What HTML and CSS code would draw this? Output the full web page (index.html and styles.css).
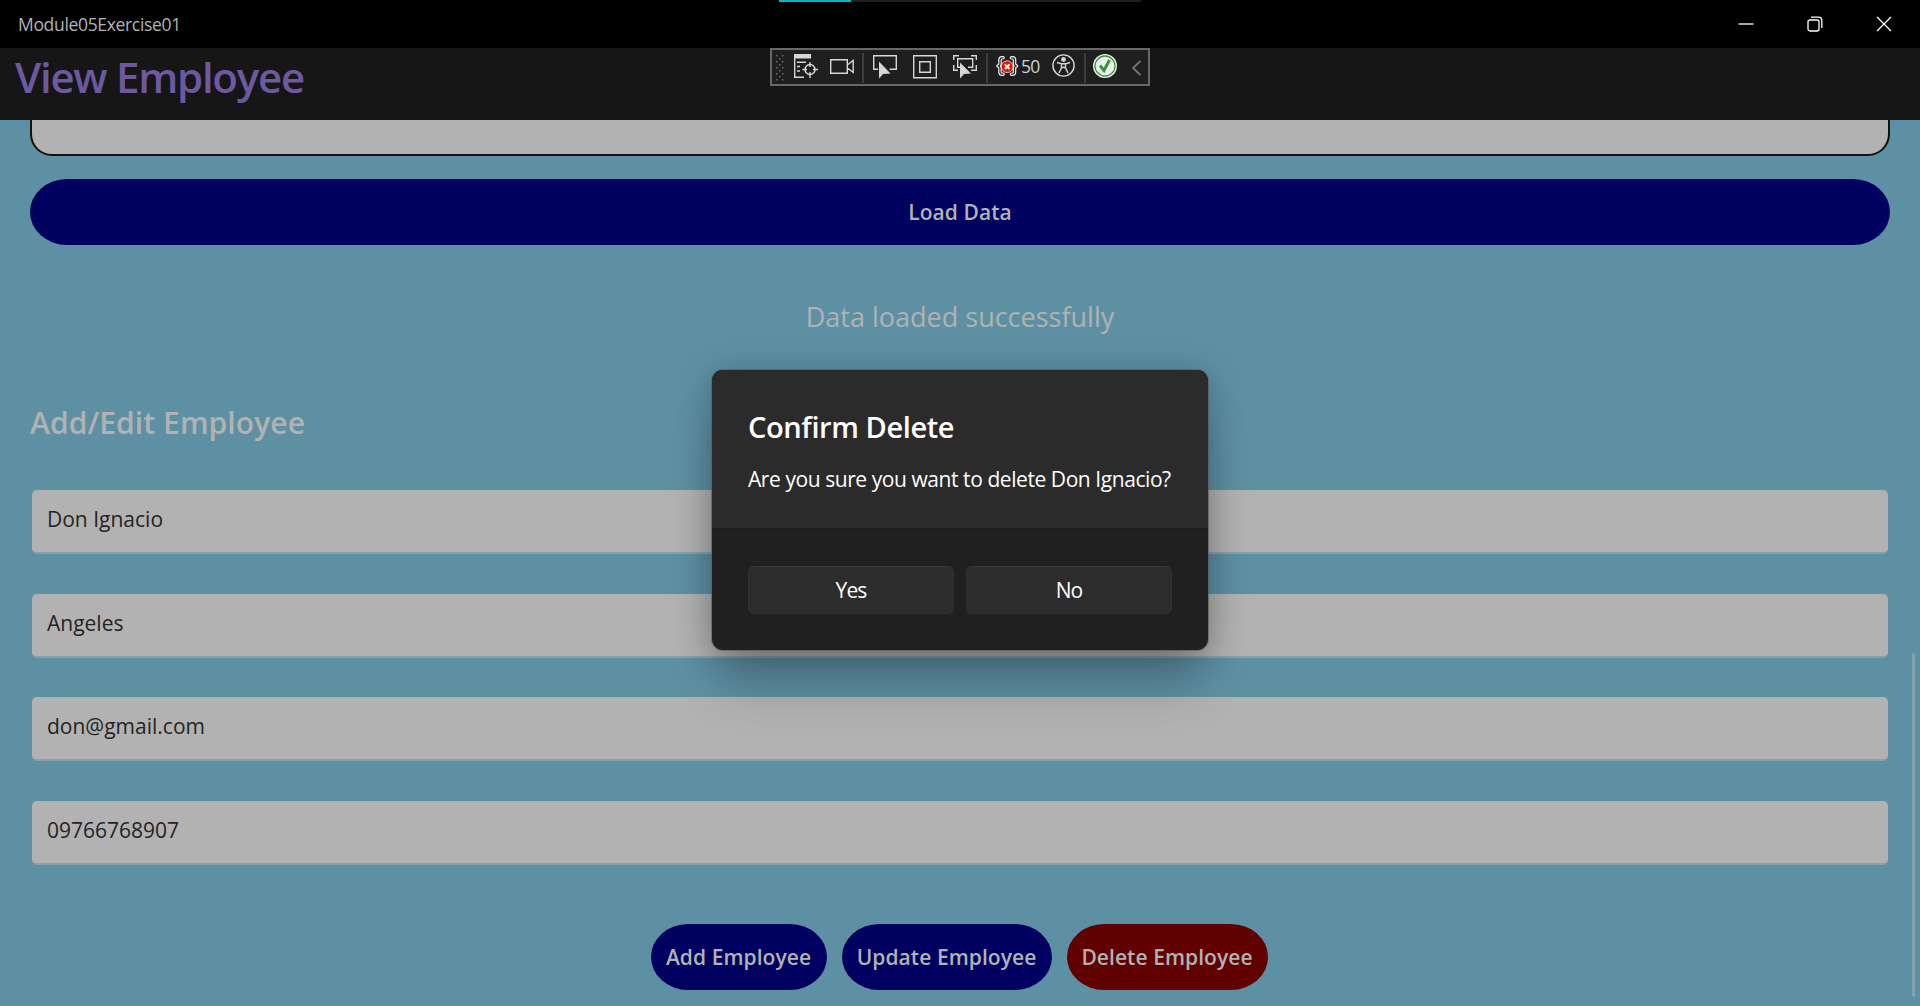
FILE: index.html
```html
<!DOCTYPE html>
<html lang="en">
<head>
<meta charset="utf-8">
<title>Module05Exercise01</title>
<link rel="stylesheet" href="styles.css">
</head>
<body>
<div class="window">
  <div class="titlebar">
    <span class="app-name">Module05Exercise01</span>
    <div class="caption-buttons">
      <svg class="caption" viewBox="0 0 16 16"><path d="M.5 8h15"/></svg>
      <svg class="caption" viewBox="0 0 16 16"><rect x="1" y="4" width="11" height="11" rx="2"/><path d="M4 1.2h7.5a3.3 3.3 0 0 1 3.3 3.3V12"/></svg>
      <svg class="caption" viewBox="0 0 16 16"><path d="M1 1l14 14M15 1L1 15"/></svg>
    </div>
  </div>
  <header class="page-header"><h1>View Employee</h1></header>

  <main class="content">
    <div class="list-frame"></div>
    <button class="btn load">Load Data</button>
    <p class="status">Data loaded successfully</p>
    <h2 class="section-title">Add/Edit Employee</h2>
    <div class="fields">
      <div class="entry">Don Ignacio</div>
      <div class="entry">Angeles</div>
      <div class="entry">don@gmail.com</div>
      <div class="entry">09766768907</div>
    </div>
    <div class="actions">
      <button class="btn add">Add Employee</button>
      <button class="btn update">Update Employee</button>
      <button class="btn delete">Delete Employee</button>
    </div>
    <div class="scroll-thumb"></div>
  </main>

  <div class="progress"><div class="progress-value"></div></div>

  <div class="debug-bar">
    <svg class="grip" viewBox="0 0 10 28"><path fill="#6a6a6a" d="M1 1h1.500v1.500H1zM7 1h1.500v1.500H7zM4 4h1.500v1.500H4zM1 7h1.500v1.500H1zM7 7h1.500v1.500H7zM4 10h1.500v1.500H4zM1 13h1.500v1.500H1zM7 13h1.500v1.500H7zM4 16h1.500v1.500H4zM1 19h1.500v1.500H1zM7 19h1.500v1.500H7zM4 22h1.500v1.500H4zM1 25h1.500v1.500H1zM7 25h1.500v1.500H7z"/></svg>
    <svg class="ico tree" viewBox="0 0 24 24"><path fill="#d6d6d6" stroke="none" d="M0 0h17v4.500H0z"/><path d="M.7 4v19.300H10M3 8.300h9M3 12.500h3M3 17h3"/><circle cx="16" cy="15.500" r="5"/><path d="M16 8v5M16 18v6M8.500 15.500H13M19 15.500h5"/></svg>
    <svg class="ico cam" viewBox="0 0 24 24"><path d="M.7 5.700h16.600v13.600H.7zM17.300 11l5.900-4.500v11.800L17.300 14"/></svg>
    <i class="sep s1"></i>
    <svg class="ico sel" viewBox="0 0 24 24"><path d="M5 15.300H.7V1.700h22.600v13.600H16.500"/><path class="solid" d="M6 7.500v17l4-4.500 7.500-.5z"/></svg>
    <svg class="ico sq" viewBox="0 0 24 24"><path d="M.7 1.700h22.600v22H.7zM6.700 7.700h10.600v10.600H6.700z"/></svg>
    <svg class="ico sq" viewBox="0 0 24 24"><path d="M.7 6V1.700H6M18 1.700h5.300V6M.7 11v5.300H5M23.300 11v5.300H18"/><path d="M8 13.300H4.700V4.700h15v8.600H15"/><path class="solid" d="M7 8.500v16l4-4.500 7-.5z"/></svg>
    <i class="sep s2"></i>
    <svg class="ico err" viewBox="0 0 24 24"><g stroke-linecap="round" stroke-linejoin="round"><path stroke="#f0f0f0" stroke-width="3.600" d="M8 3.800H7Q5 3.800 5 6V9.500Q5 12 3 12 5 12 5 14.500V18Q5 20.200 7 20.200H8M16.500 3.800H17.500Q19.500 3.800 19.500 6V9.500Q19.500 12 21.500 12 19.500 12 19.500 14.500V18Q19.500 20.200 17.500 20.200H16.500"/><path stroke="#222" stroke-width="1.200" d="M8 3.800H7Q5 3.800 5 6V9.500Q5 12 3 12 5 12 5 14.500V18Q5 20.200 7 20.200H8M16.500 3.800H17.500Q19.500 3.800 19.500 6V9.500Q19.500 12 21.500 12 19.500 12 19.500 14.500V18Q19.500 20.200 17.500 20.200H16.500"/></g><circle cx="12.200" cy="12.700" r="5.900" fill="#e51400" stroke="#f0f0f0" stroke-width=".8"/><path stroke="#fff" stroke-width="2" d="M9.900 10.400l4.600 4.600M14.500 10.400l-4.600 4.600"/></svg>
    <span class="count">50</span>
    <svg class="ico acc" viewBox="0 0 24 24"><circle cx="12.500" cy="11.500" r="10.600"/><circle cx="12.500" cy="5.500" r="2.400" fill="#d6d6d6" stroke="none"/><path d="M6 8.500l4.500 1.200v4L8 19M19 8.500l-4.500 1.200v4L17 19M10.500 9.700h4M10.500 14.200l2-1 2 1"/></svg>
    <i class="sep s3"></i>
    <svg class="ico ok" viewBox="0 0 24 24"><circle cx="12" cy="12" r="12" fill="#f0f0f0" stroke="none"/><circle cx="12" cy="12" r="10" stroke="#339933" stroke-width="1.300"/><path stroke="#339933" stroke-width="3" d="M7 11.500l4 5 5.500-10.500"/></svg>
    <svg class="chev" viewBox="0 0 9 24"><path d="M8.500 7L1 14l7.500 7"/></svg>
  </div>

  <section class="dialog">
    <div class="dialog-body">
      <h3>Confirm Delete</h3>
      <p>Are you sure you want to delete Don Ignacio?</p>
    </div>
    <div class="dialog-footer">
      <button class="yes">Yes</button>
      <button class="no">No</button>
    </div>
  </section>
</div>
</body>
</html>
```
FILE: styles.css
```css
* { box-sizing: border-box; margin: 0; padding: 0; }
body { background: #5e90a4; font-family: "Open Sans", "Noto Sans", sans-serif; overflow: hidden; }
button { border: 0; font-family: inherit; }
svg { display: block; flex: none; fill: none; }
.window { position: relative; width: 1920px; height: 1006px; display: flex; flex-direction: column; }

.titlebar { height: 48px; flex: none; background: #000; display: flex; justify-content: space-between; align-items: center; padding: 0 28px 0 18px; }
.app-name { font-size: 17.5px; line-height: 24px; color: #b2b2b2; letter-spacing: -0.33px; white-space: nowrap; }
.caption-buttons { display: flex; gap: 53px; }
.caption { width: 16px; height: 16px; stroke: #fff; stroke-width: 1.3; }

.page-header { height: 72px; flex: none; background: #161616; padding-left: 15px; }
.page-header h1 { font-size: 42px; line-height: 58px; font-weight: 600; color: #6c59a0; letter-spacing: -1.25px; white-space: nowrap; }

.content { flex: 1; min-height: 0; position: relative; padding: 0 30px; display: flex; flex-direction: column; background: #5e90a4; }
.list-frame { height: 36px; flex: none; background: #b2b2b2; border: 2px solid #111; border-top: 0; border-radius: 0 0 22px 22px; }
.btn { height: 66px; flex: none; background: #000060; color: #b2b2b2; font-size: 21px; font-weight: 600; border-radius: 37px / 33px; white-space: nowrap; letter-spacing: 0.06px; }
.load { margin-top: 23px; }
.status { margin-top: 53px; height: 37px; line-height: 37px; font-size: 27px; color: #b2b2b2; text-align: center; }
.section-title { margin-top: 67px; height: 41px; line-height: 41px; font-size: 30px; font-weight: 600; color: #b2b2b2; letter-spacing: 0.08px; }
.fields { margin: 47px 2px 0; display: grid; gap: 39.5px; }
.entry { height: 64px; background: #b2b2b2; border-bottom: 2px solid #86a1ab; border-radius: 5px; padding: 15px 0 0 15px; font-size: 21px; line-height: 29px; color: #242424; }
.actions { margin: 59px 2px 0 0; display: flex; gap: 15px; justify-content: center; }
.add { width: 176px; }
.update { width: 210px; }
.delete { width: 201px; background: #600000; }
.scroll-thumb { position: absolute; left: 1912px; top: 533px; width: 3px; height: 344px; border-radius: 2px; background: #86a1ab; }

.progress { position: absolute; left: 779px; top: 0; width: 362px; height: 2px; background: #202020; }
.progress-value { width: 72px; height: 2px; background: #00b7c3; }

.debug-bar { position: absolute; left: 770px; top: 48px; width: 380px; height: 38px; border: 2px solid #686868; background: #1f1f1f; display: flex; align-items: flex-start; padding: 4px 0 0 3px; }
.grip { width: 10px; height: 28px; }
.ico { width: 24px; height: 24px; stroke: #d6d6d6; stroke-width: 1.4; overflow: visible; }
.solid { fill: #d6d6d6; stroke: none; }
.tree { margin-left: 9px; }
.cam { margin-left: 12px; }
.sep { width: 2px; height: 30px; margin-top: -1px; background: #3d3d3d; flex: none; }
.s1 { margin-left: 8px; }
.sel { margin-left: 9px; }
.sq { margin-left: 16px; }
.s2, .s3 { margin-left: 9px; }
.err { margin-left: 7px; }
.count { width: 20px; margin-left: 2px; font-size: 17.5px; line-height: 24px; letter-spacing: -0.8px; color: #d0d0d0; }
.acc { margin-left: 10px; }
.ok { margin-left: 7px; }
.chev { margin-left: 15px; width: 9px; height: 24px; stroke: #777; stroke-width: 1.8; }

.dialog { position: absolute; left: 712px; top: 370px; width: 496px; height: 280px; border-radius: 11px; background: #202020; color: #fff; display: flex; flex-direction: column; box-shadow: 0 0 0 1px rgba(90,90,90,.55), 0 42px 50px -8px rgba(0,0,0,.22), 0 4px 34px rgba(0,0,0,.25); }
.dialog-body { height: 159px; flex: none; background: #2b2b2b; border-bottom: 1px solid #1c1c1c; border-radius: 11px 11px 0 0; padding: 36px 0 0 36px; white-space: nowrap; }
.dialog h3 { font-size: 29px; line-height: 42px; font-weight: 600; letter-spacing: -0.4px; }
.dialog p { margin-top: 17px; font-size: 21px; line-height: 29px; letter-spacing: -0.43px; }
.dialog-footer { padding: 37px 36px; display: flex; gap: 12px; }
.dialog button { width: 206px; height: 48px; border: 1px solid #323232; border-top-color: #373737; border-radius: 6px; background: #2d2d2d; color: #fff; font-size: 21px; letter-spacing: -0.9px; }
```
